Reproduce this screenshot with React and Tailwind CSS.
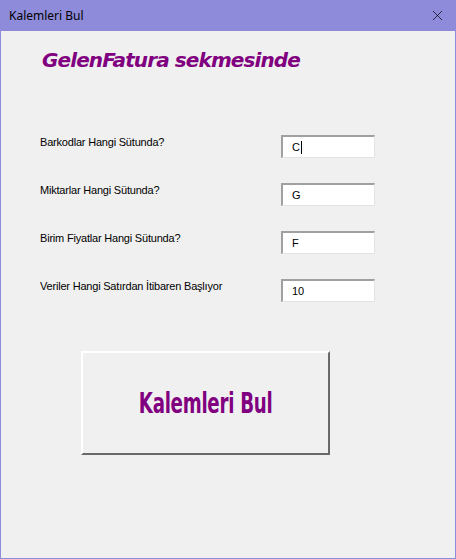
import { X } from 'lucide-react'

const FIELDS = [
  { label: 'Barkodlar Hangi Sütunda?', value: 'C', caret: true },
  { label: 'Miktarlar Hangi Sütunda?', value: 'G' },
  { label: 'Birim Fiyatlar Hangi Sütunda?', value: 'F' },
  { label: 'Veriler Hangi Satırdan İtibaren Başlıyor', value: '10' },
]

function Field({ label, value, caret }) {
  return (
    <div className="flex items-start h-[48px]">
      <div className="w-[241px] text-[11px] leading-[14px] tracking-[-0.2px] text-black">{label}</div>
      <div className="w-[94px] h-[23px] bg-white border-t-2 border-l-2 border-t-[#a0a0a0] border-l-[#a0a0a0] border-b border-r border-b-[#e3e3e3] border-r-[#e3e3e3] flex items-center pl-[9px] text-[11px] text-black">
        <span>{value}</span>
        {caret && <span className="w-px h-[13px] bg-black ml-px" />}
      </div>
    </div>
  )
}

export default function App() {
  return (
    <div className="w-[456px] h-[559px] bg-[#8e8bda] p-px pt-0 flex flex-col font-['Liberation_Sans',sans-serif]">
      <div className="h-[31px] flex items-center justify-between pl-[8px] pr-[9px] text-[12px] text-black font-['Noto_Sans',sans-serif]">
        <span>Kalemleri Bul</span>
        <X size={17} strokeWidth={1} />
      </div>
      <div className="flex-1 bg-[#f0f0f0] flex flex-col pl-[39px]">
        <h1 className="mt-[15px] pl-[2px] text-[20px] leading-[28px] font-bold italic text-[#800080] font-['DejaVu_Sans',sans-serif] tracking-[-0.9px]">
          GelenFatura sekmesinde
        </h1>
        <div className="mt-[61px] flex flex-col">
          {FIELDS.map(f => <Field key={f.label} {...f} />)}
        </div>
        <div className="mt-[24px] ml-[41px] w-[249px] h-[104px] border-t-2 border-l-2 border-white border-r-2 border-b-2 border-r-[#696969] border-b-[#696969] flex items-center justify-center">
          <span className="inline-block text-[22px] font-bold text-[#800080] font-['DejaVu_Sans_Condensed',sans-serif] tracking-[-0.3px] scale-x-[0.92] scale-y-[1.25]">
            Kalemleri Bul
          </span>
        </div>
      </div>
    </div>
  )
}
